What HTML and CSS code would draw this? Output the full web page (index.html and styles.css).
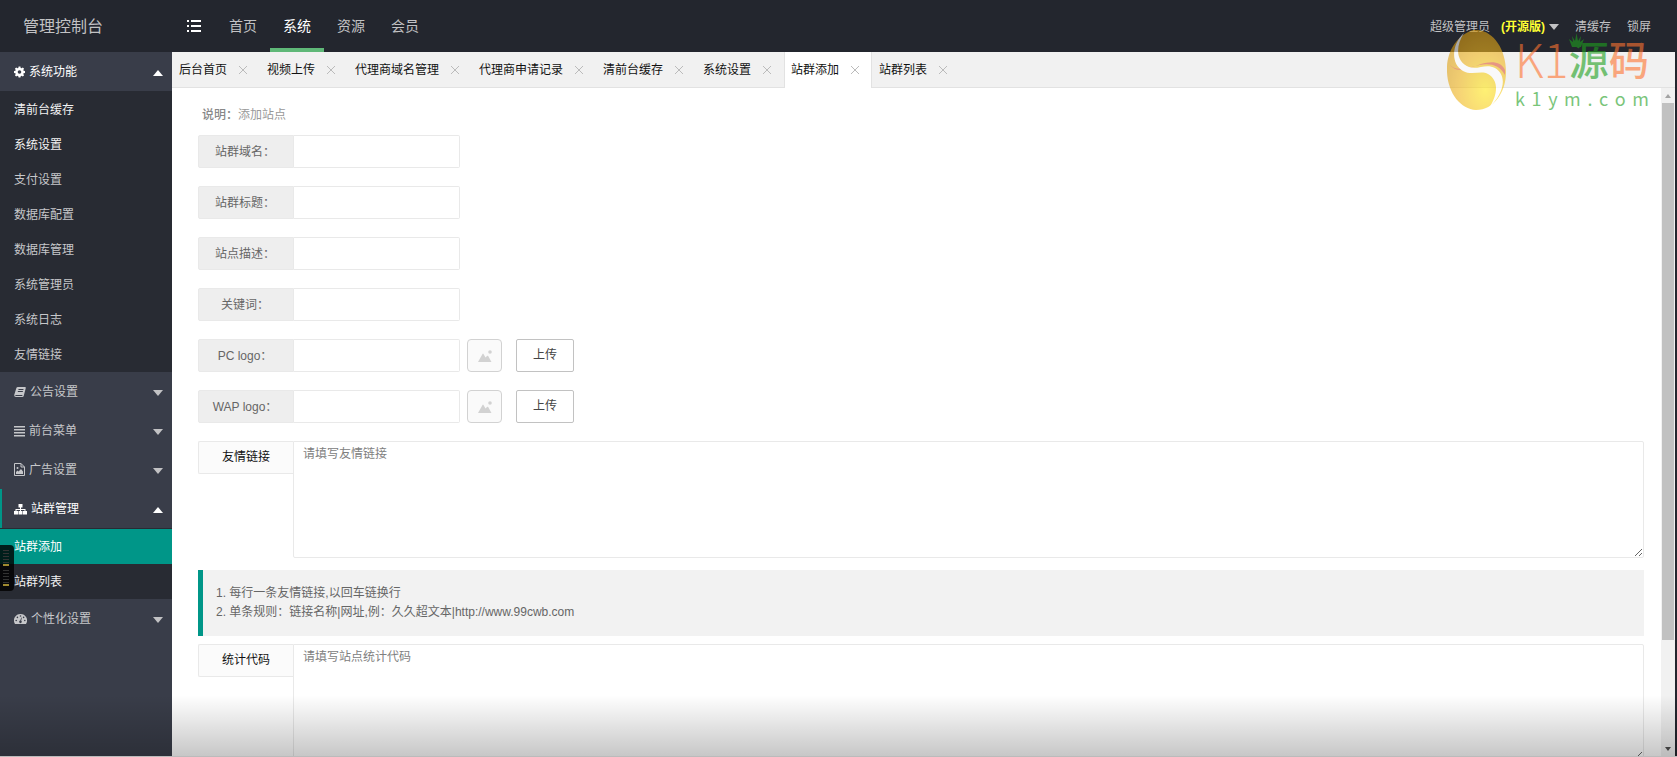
FILE: index.html
```html
<!DOCTYPE html>
<html lang="zh-CN">
<head>
    <meta charset="UTF-8">
    <meta name="viewport" content="width=device-width, initial-scale=1.0">
    <title>管理控制台</title>
    <link rel="stylesheet" href="styles.css">
</head>
<body>
    <!-- 顶部导航 -->
    <header class="header">
        <div class="logo">管理控制台</div>
        <button class="toggle" type="button" aria-label="菜单">
            <svg width="14" height="12" viewBox="0 0 14 12" fill="#fff"><path d="M0 0h2v2H0zM4 0h10v2H4zM0 5h2v2H0zM4 5h10v2H4zM0 10h2v2H0zM4 10h10v2H4z"/></svg>
        </button>
        <nav class="top-nav">
            <a href="#">首页</a>
            <a href="#" class="active">系统</a>
            <a href="#">资源</a>
            <a href="#">会员</a>
        </nav>
        <div class="user-nav">
            <a href="#" class="user">超级管理员 <b>(开源版)</b><i class="caret"></i></a>
            <a href="#">清缓存</a>
            <a href="#">锁屏</a>
        </div>
    </header>

    <div class="main">
        <!-- 左侧菜单 -->
        <aside class="sidebar">
            <div class="nav-item open">
                <button type="button">
                    <svg width="11" height="12" viewBox="0 0 12 12"><path fill="currentColor" fill-rule="evenodd" d="M5 0h2l.3 1.500 1 .4L9.600 1 11 2.400l-.9 1.300.4 1L12 5v2l-1.500.3-.4 1 .9 1.300L9.600 11l-1.300-.9-1 .4L7 12H5l-.3-1.500-1-.4-1.300.9L1 9.600l.9-1.300-.4-1L0 7V5l1.500-.3.4-1L1 2.400 2.400 1l1.300.9 1-.4zM6 4a2 2 0 1 0 0 4 2 2 0 0 0 0-4z"/></svg>
                    <span>系统功能</span><i class="caret up"></i>
                </button>
                <div class="nav-child">
                    <a href="#" class="light">清前台缓存</a>
                    <a href="#" class="light">系统设置</a>
                    <a href="#">支付设置</a>
                    <a href="#">数据库配置</a>
                    <a href="#">数据库管理</a>
                    <a href="#">系统管理员</a>
                    <a href="#">系统日志</a>
                    <a href="#">友情链接</a>
                </div>
            </div>
            <div class="nav-item">
                <button type="button">
                    <svg width="12" height="12" viewBox="0 0 12 12"><path fill="currentColor" fill-rule="evenodd" d="M4 1h7q1 0 .8 1L9.700 10q-.3 1-1.300 1H2Q0 11 .2 9L2.200 2.400Q2.600 1 4 1zM4.600 3l-.3 1h5l.3-1zM4 5l-.3 1h5L9 5zM2 9q-.7 0-.8 1H8.200l.3-1z"/></svg>
                    <span>公告设置</span><i class="caret"></i>
                </button>
            </div>
            <div class="nav-item">
                <button type="button">
                    <svg width="11" height="12" viewBox="0 0 11 12"><path fill="currentColor" d="M0 1h11v1.500H0zM0 4h11v1.500H0zM0 7h11v1.500H0zM0 10h11v1.500H0z"/></svg>
                    <span>前台菜单</span><i class="caret"></i>
                </button>
            </div>
            <div class="nav-item">
                <button type="button">
                    <svg width="11" height="13" viewBox="0 0 11 13" fill="none" stroke="currentColor"><path d="M.5.5h6.500L10.500 4v8.500H.5zM7 .5V4h3.500"/><path fill="currentColor" stroke="none" d="M2 11V9l1.500-1.500 1 1L7 6l2 2.500V11z"/><circle cx="3.500" cy="5" r="1" fill="currentColor" stroke="none"/></svg>
                    <span>广告设置</span><i class="caret"></i>
                </button>
            </div>
            <div class="nav-item current">
                <button type="button">
                    <svg width="13" height="12" viewBox="0 0 13 12"><path fill="currentColor" d="M4.500 1h4v3.500H7V6h4.500v2H13v3.500H9V8h1.500V7H7v1h1.500v3.500h-4V8H6V7H2.500v1H4v3.500H0V8h1.500V6H6V4.500H4.500z"/></svg>
                    <span>站群管理</span><i class="caret up"></i>
                </button>
                <div class="nav-child">
                    <a href="#" class="active">站群添加</a>
                    <a href="#" class="light">站群列表</a>
                </div>
            </div>
            <div class="nav-item">
                <button type="button">
                    <svg width="13" height="12" viewBox="0 0 13 12"><path fill="currentColor" d="M6.500 1A6.500 6.500 0 0 0 1 11h11A6.500 6.500 0 0 0 6.500 1z"/><g fill="#393d49"><circle cx="2.200" cy="7.500" r=".8"/><circle cx="3.400" cy="4.400" r=".8"/><circle cx="6.500" cy="3" r=".8"/><circle cx="9.600" cy="4.400" r=".8"/><circle cx="10.800" cy="7.500" r=".8"/><path d="M7.200 4.500l.6.200-.6 3a1.300 1.300 0 1 1-.9-.2z"/></g></svg>
                    <span>个性化设置</span><i class="caret"></i>
                </button>
            </div>
        </aside>

        <section class="page">
            <!-- 标签页 -->
            <div class="tabs">
                <div class="tab"><a href="#">后台首页</a><button type="button" aria-label="关闭"></button></div>
                <div class="tab"><a href="#">视频上传</a><button type="button" aria-label="关闭"></button></div>
                <div class="tab"><a href="#">代理商域名管理</a><button type="button" aria-label="关闭"></button></div>
                <div class="tab"><a href="#">代理商申请记录</a><button type="button" aria-label="关闭"></button></div>
                <div class="tab"><a href="#">清前台缓存</a><button type="button" aria-label="关闭"></button></div>
                <div class="tab"><a href="#">系统设置</a><button type="button" aria-label="关闭"></button></div>
                <div class="tab active"><a href="#">站群添加</a><button type="button" aria-label="关闭"></button></div>
                <div class="tab"><a href="#">站群列表</a><button type="button" aria-label="关闭"></button></div>
            </div>

            <div class="body">
                <form class="form">
                    <p class="tip"><b>说明：</b>添加站点</p>
                    <div class="row">
                        <label for="domain">站群域名：</label>
                        <input type="text" id="domain">
                    </div>
                    <div class="row">
                        <label for="title">站群标题：</label>
                        <input type="text" id="title">
                    </div>
                    <div class="row">
                        <label for="desc">站点描述：</label>
                        <input type="text" id="desc">
                    </div>
                    <div class="row">
                        <label for="keywords">关键词：</label>
                        <input type="text" id="keywords">
                    </div>
                    <div class="row">
                        <label for="pc-logo">PC logo：</label>
                        <input type="text" id="pc-logo">
                        <button type="button" class="preview" aria-label="预览">
                            <svg width="14" height="12" viewBox="0 0 14 12" fill="#d2d2d2"><path d="M0 12l4.500-8q.5-.8 1 0l2 3.500L9 6q.6-.6 1.200 0l3.300 6z"/><circle cx="12" cy="2" r="1.800"/></svg>
                        </button>
                        <button type="button" class="upload">上传</button>
                    </div>
                    <div class="row">
                        <label for="wap-logo">WAP logo：</label>
                        <input type="text" id="wap-logo">
                        <button type="button" class="preview" aria-label="预览">
                            <svg width="14" height="12" viewBox="0 0 14 12" fill="#d2d2d2"><path d="M0 12l4.500-8q.5-.8 1 0l2 3.500L9 6q.6-.6 1.200 0l3.300 6z"/><circle cx="12" cy="2" r="1.800"/></svg>
                        </button>
                        <button type="button" class="upload">上传</button>
                    </div>
                    <div class="row-text">
                        <label for="links">友情链接</label>
                        <textarea id="links" placeholder="请填写友情链接"></textarea>
                    </div>
                    <div class="quote">
                        <div>1. 每行一条友情链接,以回车链换行</div>
                        <div>2. 单条规则：链接名称|网址,例：久久超文本|http://www.99cwb.com</div>
                    </div>
                    <div class="row-text">
                        <label for="stat">统计代码</label>
                        <textarea id="stat" placeholder="请填写站点统计代码"></textarea>
                    </div>
                </form>
                <!-- 滚动条 -->
                <div class="scrollbar">
                    <i class="arrow up"></i>
                    <div class="track"><div class="thumb"></div></div>
                    <i class="arrow"></i>
                </div>
            </div>
        </section>
    </div>

    <!-- 水印 -->
    <div class="watermark">
        <svg width="60" height="80" viewBox="0 0 60 80">
            <defs>
                <radialGradient id="egg" cx=".65" cy=".75" r=".8">
                    <stop offset="0" stop-color="#ffe818"/>
                    <stop offset=".6" stop-color="#f0b41c"/>
                    <stop offset="1" stop-color="#d89a10"/>
                </radialGradient>
            </defs>
            <path fill="url(#egg)" d="M26 0C8 6-1 24 0 42c1 22 14 37 29 38 18 0 30-18 30-38C59 17 44-2 26 0z"/>
            <path fill="#e05a3c" d="M1 32c4 8 13 8 24 5 14-5 27-4 33 8v-5c-4-9-14-9-24-6-13 5-26 11-33-2z"/>
            <path fill="#fff" d="M17 3C5 14 3 33 16 41c9 5 18-1 25 3 12 7 9 22 1 34 15-15 19-32 6-40-9-5-17 2-26-1C9 32 8 17 17 3z"/>
        </svg>
        <div class="mark-text">
            <div class="mark-name">
                <span class="thin">K1</span><span class="green">源<svg width="15" height="14" viewBox="0 0 15 14" fill="currentColor"><path d="M3 14L0 6l4 3-1-6 3 5 1.500-8L9 8l3-5-1 6 4-3-3 8z"/></svg></span><span>码</span>
            </div>
            <div class="mark-site">
                <span>k</span><span>1</span><span>y</span><span>m</span><span>.</span><span>c</span><span>o</span><span>m</span>
            </div>
        </div>
    </div>

    <!-- 音量指示 -->
    <div class="meter"><i></i><i></i></div>
    <div class="shade"></div>
</body>
</html>
```
FILE: styles.css
```css
* {
    box-sizing: border-box;
}

body {
    margin: 0;
    height: 100vh;
    display: flex;
    flex-direction: column;
    overflow: hidden;
    border-right: 2px solid #23262e;
    background: #fff;
    color: #666;
    font: 12px/19px "Liberation Sans", "Noto Sans CJK SC", sans-serif;
}

a {
    color: inherit;
    text-decoration: none;
}

button,
input,
textarea {
    font: inherit;
    color: inherit;
    margin: 0;
    padding: 0;
    border: 0;
    background: none;
    border-radius: 0;
    outline: none;
}

/* 顶部 */
.header {
    display: flex;
    align-items: center;
    height: 52px;
    flex-shrink: 0;
    background: #23262e;
    color: #c2c2c4;
}

.logo {
    width: 172px;
    padding-left: 23px;
    font-size: 16px;
}

.toggle {
    display: flex;
    justify-content: center;
    width: 44px;
}

.top-nav {
    display: flex;
    font-size: 14px;
}

.top-nav a {
    height: 52px;
    padding: 0 13px;
    line-height: 52px;
}

.top-nav .active {
    color: #fff;
    border-bottom: 4px solid #5fb878;
}

.user-nav {
    display: flex;
    gap: 16px;
    margin-left: auto;
    padding: 2px 24px 0 0;
}

.user {
    display: flex;
    align-items: center;
}

.user b {
    margin: 0 4px 0 11px;
    color: #ff3;
}

.caret {
    border: 5px solid transparent;
    border-top: 6px solid #c2c2c4;
    border-bottom: 0;
}

.caret.up {
    border-top: 0;
    border-bottom: 6px solid #fff;
}

.main {
    display: flex;
    flex: 1;
    min-height: 0;
}

/* 左侧菜单 */
.sidebar {
    width: 172px;
    flex-shrink: 0;
    background: #393d49;
    color: #c6c7ca;
}

.nav-item button {
    display: flex;
    align-items: center;
    gap: 4px;
    width: 100%;
    height: 39px;
    padding: 2px 9px 0 14px;
}

.nav-item svg {
    margin-bottom: 2px;
}

.nav-item .caret {
    margin-left: auto;
}

.nav-item.open button,
.nav-item.current button {
    color: #fff;
}

.nav-item.current button {
    padding-left: 12px;
    border-left: 2px solid #009688;
}

.nav-child {
    padding-top: 1px;
    background: #282b33;
}

.nav-child a {
    display: block;
    padding: 2px 0 0 14px;
    line-height: 33px;
}

.nav-child .light {
    color: #f2f2f2;
}

.nav-child .active {
    background: #009688;
    color: #fff;
}

/* 标签页 */
.page {
    display: flex;
    flex-direction: column;
    flex: 1;
    min-width: 0;
}

.tabs {
    display: flex;
    height: 36px;
    flex-shrink: 0;
    background: #f1f1f1;
    border-bottom: 1px solid #e2e2e2;
    color: #111;
}

.tab {
    display: flex;
    align-items: center;
    gap: 12px;
    height: 36px;
    padding: 0 13px 0 7px;
}

.tab.active {
    background: #fff;
    box-shadow: inset 1px 0 #e2e2e2, inset -1px 0 #e2e2e2;
}

.tab button {
    width: 8px;
    height: 8px;
    background:
        linear-gradient(45deg, transparent 45%, #bbb 45%, #bbb 55%, transparent 55%),
        linear-gradient(-45deg, transparent 45%, #bbb 45%, #bbb 55%, transparent 55%);
}

/* 表单 */
.body {
    display: flex;
    flex: 1;
    min-height: 0;
    overflow: hidden;
}

.form {
    flex: 1;
    min-width: 0;
    padding: 18px 17px 0 26px;
}

.tip {
    margin: 0 0 10px;
    padding-left: 4px;
    color: #999;
}

.tip b {
    color: #888;
    font-weight: 500;
}

.row {
    display: flex;
    margin-bottom: 18px;
}

.row label {
    width: 96px;
    height: 33px;
    padding-right: 2px;
    line-height: 33px;
    text-align: center;
    background: #eee;
    border: 1px solid #e9e9e9;
    border-radius: 2px 0 0 2px;
}

.row input {
    width: 166px;
    height: 33px;
    padding: 0 10px;
    border: 1px solid #e9e9e9;
    border-left: 0;
    border-radius: 0 2px 2px 0;
}

.preview {
    display: flex;
    align-items: center;
    justify-content: center;
    width: 35px;
    height: 33px;
    margin: 0 14px 0 7px;
    background: #fafafa;
    border: 1px solid #d2d2d2;
    border-radius: 4px;
}

.upload {
    width: 58px;
    height: 33px;
    border: 1px solid #c2c2c2;
    border-radius: 2px;
    color: #444;
}

.row-text {
    display: flex;
    align-items: flex-start;
}

.row-text label {
    width: 95px;
    height: 33px;
    line-height: 31px;
    text-align: center;
    color: #111;
    background: #fbfbfb;
    border: 1px solid #e9e9e9;
    border-right: 0;
    border-radius: 2px 0 0 2px;
}

.row-text textarea {
    flex: 1;
    height: 117px;
    padding: 3px 9px;
    border: 1px solid #e9e9e9;
    border-radius: 0 2px 2px 2px;
    resize: vertical;
}

.row-text textarea::placeholder {
    color: #808080;
}

.quote {
    margin: 12px 0 8px;
    padding: 14px 13px;
    background: #f2f2f2;
    border-left: 5px solid #009688;
}

/* 滚动条 */
.scrollbar {
    display: flex;
    flex-direction: column;
    align-items: center;
    width: 14px;
    padding: 6px 1px;
    background: #f1f1f1;
}

.track {
    flex: 1;
    align-self: stretch;
    margin: 5px 0;
}

.thumb {
    height: 84%;
    background: #c1c1c1;
}

.arrow {
    border: 3px solid transparent;
    border-top: 4px solid #505050;
    border-bottom: 0;
}

.arrow.up {
    border-top: 0;
    border-bottom: 4px solid #a3a3a3;
}

/* 水印 */
.watermark {
    position: absolute;
    top: 30px;
    right: 28px;
    display: flex;
    gap: 8px;
    opacity: 0.6;
    pointer-events: none;
}

.mark-text {
    width: 134px;
}

.mark-name {
    display: flex;
    justify-content: space-between;
    font: 500 40px/56px "Noto Sans CJK SC", sans-serif;
    color: #ff7430;
}

.mark-name .thin {
    font-size: 46px;
    font-weight: 300;
}

.mark-name .green {
    position: relative;
    color: #1fa01f;
}

.mark-name .green svg {
    position: absolute;
    top: 3px;
    left: 0;
}

.mark-site {
    display: flex;
    justify-content: space-between;
    font: 18px/24px "Noto Sans CJK SC", sans-serif;
    color: #1fa01f;
}

/* 音量指示 */
.meter {
    position: absolute;
    top: 545px;
    left: 0;
    display: flex;
    flex-direction: column;
    gap: 4px;
    width: 14px;
    height: 46px;
    padding: 5px 5px 5px 3px;
    background: rgba(0, 0, 0, 0.8);
    border-radius: 0 4px 4px 0;
}

.meter i {
    flex: 1;
    background: repeating-linear-gradient(#333 0 1px, transparent 1px 3px);
    border-bottom: 2px solid #a08a30;
}

/* 底部渐变遮罩 */
.shade {
    position: absolute;
    left: 0;
    right: 0;
    bottom: 0;
    height: 62px;
    background: linear-gradient(transparent, rgba(0, 0, 0, 0.22));
    border-bottom: 1px solid #bbb;
    pointer-events: none;
}
```
